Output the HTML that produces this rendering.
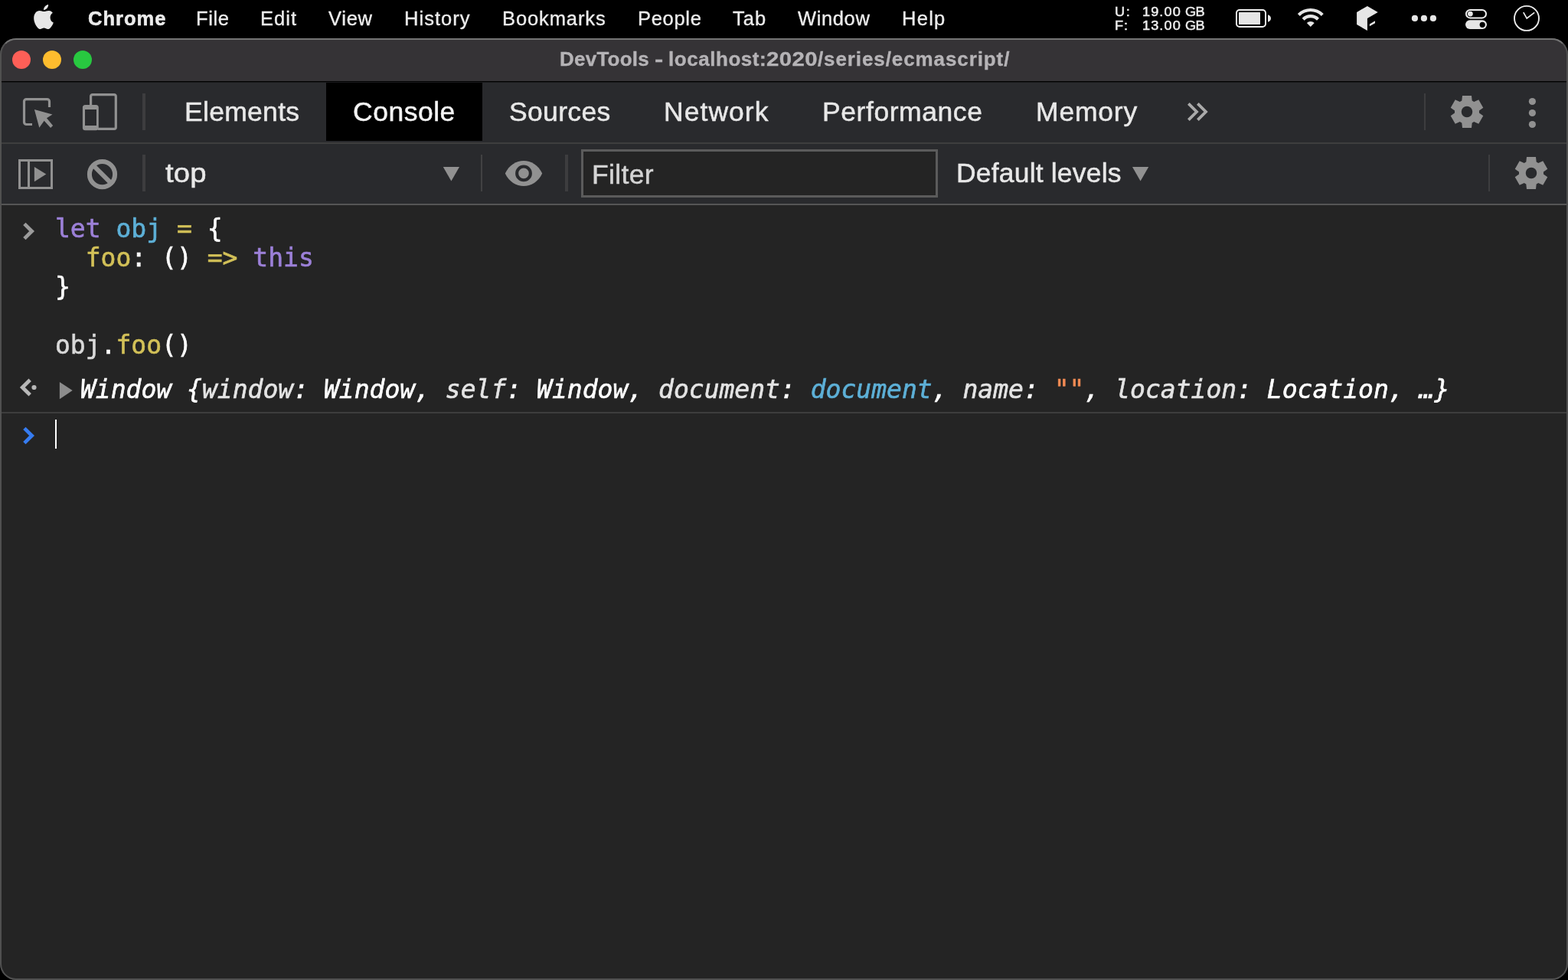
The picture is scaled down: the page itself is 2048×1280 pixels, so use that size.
<!DOCTYPE html>
<html lang="en">
<head>
<meta charset="utf-8">
<title>DevTools - localhost:2020/series/ecmascript/</title>
<style>
html,body{margin:0;padding:0;background:#000;}
body{width:2048px;height:1280px;position:relative;overflow:hidden;font-family:"Liberation Sans",sans-serif;}
.abs{position:absolute;}
.t{position:absolute;white-space:pre;line-height:1;will-change:transform;-webkit-text-stroke:0.35px;}
svg{position:absolute;overflow:visible;}
#menubar{left:0;top:0;width:2048px;height:50px;background:#000;}
.mi{font-size:25.5px;color:#ececec;}
.mb{font-weight:bold;-webkit-text-stroke:0.55px;}
.stat{font-size:16.5px;color:#ececec;-webkit-text-stroke:0.5px;}
#win{left:0;top:50px;width:2048px;height:1230px;border-radius:21px;background:#242424;overflow:hidden;}
#pg{left:0;top:-50px;width:2048px;height:1280px;}
#winborder{left:0;top:50px;width:2048px;height:1230px;box-sizing:border-box;border:2px solid #505050;border-top-color:#747474;border-radius:21px;}
#titlebar{left:0;top:50px;width:2048px;height:56px;background:#353336;}
#tline{left:0;top:106px;width:2048px;height:2px;background:linear-gradient(#000 50%,#1b1b1d 50%);}
#tabbar{left:0;top:108px;width:2048px;height:78px;background:#292a2d;}
#tabline{left:0;top:186px;width:2048px;height:2px;background:#3e3e3e;}
#toolbar{left:0;top:188px;width:2048px;height:78px;background:#292a2d;}
#toolline{left:0;top:266px;width:2048px;height:2px;background:#555;}
.title{font-size:26px;font-weight:bold;color:#b5b3b6;}
.tab{font-size:35.5px;color:#e8e8e8;-webkit-text-stroke:0.5px;}
.sel{color:#f4f4f4;}
.flt{color:#d4d4d4;}
.mono{font-family:"DejaVu Sans Mono","Liberation Mono",monospace;font-size:33px;line-height:38px;white-space:pre;will-change:transform;-webkit-text-stroke:0.6px;}
.kw{color:#9c80d8;}
.df{color:#5db0d7;}
.pr{color:#d3c158;}
.pl{color:#fff;}
.st{color:#f28b54;}
.it{font-style:italic;}
.dim{color:#e4e4e4;}
.var{color:#d9d9d9;}
</style>
</head>
<body>
<div id="menubar" class="abs"><svg width="2048" height="50" viewBox="0 0 2048 50" style="left:0;top:0;">
<g transform="translate(32 0) scale(0.034364)" fill="#e6e6e6"><path d="M740 440C800 440 850 400 930 405C990 408 1040 440 1072 490C1010 530 975 600 978 675C980 760 1030 830 1100 858C1080 930 1030 1010 980 1060C950 1090 920 1105 885 1105C830 1105 800 1065 740 1065C680 1065 650 1105 595 1105C560 1105 530 1085 495 1045C420 960 355 820 355 690C355 520 450 405 570 405C640 405 690 440 740 440Z"/><path d="M727 378C720 300 790 190 905 172C915 260 840 370 727 378Z"/></g>
<rect x="1615" y="13" width="38" height="22" rx="4" ry="4" fill="none" stroke="#f0f0f0" stroke-width="2"/>
<rect x="1618" y="16" width="28" height="16" rx="0.5" fill="#e6e6e6"/>
<path fill="#e6e6e6" d="M1656 19.3C1658.5 19.8 1660 22 1660 24C1660 26 1658.5 28.2 1656 28.7Z"/>
<path fill="#e6e6e6" d="M1694.83 17.93A24 24 0 0 1 1728.77 17.93L1725.80 20.90A19.8 19.8 0 0 0 1697.80 20.90ZM1700.63 23.73A15.8 15.8 0 0 1 1722.97 23.73L1720.00 26.70A11.6 11.6 0 0 0 1703.60 26.70ZM1711.80 34.90L1706.85 29.95A7 7 0 0 1 1716.75 29.95Z"/>
<path fill="#e6e6e6" d="M1785.9 7.9L1799.7 15.9L1785.9 24.1V40L1772.1 32V15.9Z"/>
<path fill="#e6e6e6" d="M1788.9 31.4L1796 27.2V30.2L1788.9 34.2Z"/>
<circle cx="1847.9" cy="23.9" r="4.1" fill="#e6e6e6"/>
<circle cx="1859.9" cy="23.9" r="4.1" fill="#e6e6e6"/>
<circle cx="1871.9" cy="23.9" r="4.1" fill="#e6e6e6"/>
<rect x="1915" y="13" width="26" height="10.4" rx="5.2" fill="none" stroke="#f0f0f0" stroke-width="2"/>
<circle cx="1920.4" cy="18.1" r="3.4" fill="#e6e6e6"/>
<rect x="1914" y="26.3" width="28" height="11.6" rx="5.8" fill="#e6e6e6"/>
<circle cx="1936.2" cy="32.3" r="3.6" fill="#000"/>
<circle cx="1994" cy="23.9" r="16" fill="none" stroke="#ececec" stroke-width="1.9"/>
<path fill="none" stroke="#ececec" stroke-width="1.7" d="M1989.75 16.1L1994.2 23.9L2004.2 16.4"/>
</svg></div>
<div id="win" class="abs"><div id="pg" class="abs">
<div id="titlebar" class="abs"></div>
<div class="abs" style="left:16px;top:66px;width:24px;height:24px;border-radius:50%;background:#fe5f57;"></div>
<div class="abs" style="left:56px;top:66px;width:24px;height:24px;border-radius:50%;background:#febc2e;"></div>
<div class="abs" style="left:96px;top:66px;width:24px;height:24px;border-radius:50%;background:#28c840;"></div>
<div id="tline" class="abs"></div>
<div id="tabbar" class="abs"></div>
<div class="abs" style="left:426px;top:108px;width:204px;height:76px;background:#000;"></div>
<div id="tabline" class="abs"></div>
<div id="toolbar" class="abs"></div>
<div id="toolline" class="abs"></div>
<div class="abs" style="left:759px;top:195px;width:466px;height:63px;box-sizing:border-box;border:3px solid #5b5b5b;background:#242424;"></div>
<svg width="2048" height="1280" viewBox="0 0 2048 1280" style="left:0;top:0;">
<rect x="186" y="122" width="4" height="48" fill="#3d3d3f"/>
<rect x="1860" y="122" width="2" height="48" fill="#3d3d3f"/>
<rect x="186" y="202" width="4" height="48" fill="#3d3d3f"/>
<rect x="628" y="202" width="2" height="48" fill="#414143"/>
<rect x="738" y="202" width="4" height="48" fill="#3d3d3f"/>
<rect x="1944" y="202" width="2" height="48" fill="#3d3d3f"/>
<path fill="none" stroke="#919191" stroke-width="3.2" d="M42 162.5H34.5a3 3 0 0 1-3-3V132.6a3 3 0 0 1 3-3H61.5a3 3 0 0 1 3 3V140"/>
<path fill="#919191" d="M44.9 142.9L68.5 149.4L61 154.3L69.1 164.1L66.1 167.1L57.7 157.8L51.3 166.8Z"/>
<path fill="none" stroke="#919191" stroke-width="3.2" d="M118.6 137V125.8a2.2 2.2 0 0 1 2.2-2.2H149.1a2.2 2.2 0 0 1 2.2 2.2V166.2a2.2 2.2 0 0 1-2.2 2.2H128"/>
<path fill="#919191" fill-rule="evenodd" d="M111.4 136.9H125.3a3.5 3.5 0 0 1 3.5 3.5V166.7a3.5 3.5 0 0 1-3.5 3.5H111.4a3.5 3.5 0 0 1-3.5-3.5V140.4a3.5 3.5 0 0 1 3.5-3.5ZM111 143.1V163.9H126V143.1Z"/>
<path fill="none" stroke="#aaaaaa" stroke-width="3.8" stroke-linejoin="miter" d="M1552.35 135.36L1563 146L1552.35 156.65M1564.35 135.36L1575 146L1564.35 156.65"/>
<path fill="#919191" fill-rule="evenodd" d="M1909.30 131.47L1910.00 124.90L1922.00 124.90L1922.70 131.47A16.00 16.00 0 0 1 1925.23 132.93L1931.27 130.25L1937.27 140.65L1931.93 144.54A16.00 16.00 0 0 1 1931.93 147.46L1937.27 151.35L1931.27 161.75L1925.23 159.07A16.00 16.00 0 0 1 1922.70 160.53L1922.00 167.10L1910.00 167.10L1909.30 160.53A16.00 16.00 0 0 1 1906.77 159.07L1900.73 161.75L1894.73 151.35L1900.07 147.46A16.00 16.00 0 0 1 1900.07 144.54L1894.73 140.65L1900.73 130.25L1906.77 132.93A16.00 16.00 0 0 1 1909.30 131.47ZM1908.75 146.00a7.25 7.25 0 1 0 14.5 0a7.25 7.25 0 1 0 -14.5 0Z"/>
<path fill="#919191" fill-rule="evenodd" d="M1993.30 211.47L1994.00 204.90L2006.00 204.90L2006.70 211.47A16.00 16.00 0 0 1 2009.23 212.93L2015.27 210.25L2021.27 220.65L2015.93 224.54A16.00 16.00 0 0 1 2015.93 227.46L2021.27 231.35L2015.27 241.75L2009.23 239.07A16.00 16.00 0 0 1 2006.70 240.53L2006.00 247.10L1994.00 247.10L1993.30 240.53A16.00 16.00 0 0 1 1990.77 239.07L1984.73 241.75L1978.73 231.35L1984.07 227.46A16.00 16.00 0 0 1 1984.07 224.54L1978.73 220.65L1984.73 210.25L1990.77 212.93A16.00 16.00 0 0 1 1993.30 211.47ZM1992.75 226.00a7.25 7.25 0 1 0 14.5 0a7.25 7.25 0 1 0 -14.5 0Z"/>
<circle cx="2001.4" cy="132.5" r="4.6" fill="#919191"/>
<circle cx="2001.4" cy="147.5" r="4.6" fill="#919191"/>
<circle cx="2001.4" cy="162.5" r="4.6" fill="#919191"/>
<path fill="#919191" fill-rule="evenodd" d="M24 208H69V247H24ZM27 211V244H36V211ZM39 211V244H66V211Z"/>
<path fill="#919191" d="M44.9 218L60.3 227.5L44.9 237.3Z"/>
<circle cx="133.5" cy="227.7" r="16.6" fill="none" stroke="#919191" stroke-width="6"/>
<path stroke="#919191" stroke-width="6" d="M121.8 216L145.2 239.4"/>
<path fill="#919191" d="M578.8 218.1H600L589.4 236.4Z"/>
<path fill="#919191" d="M1479 218.1H1500.2L1489.6 236.4Z"/>
<path fill="#919191" d="M659.8 226.4C670 204.4 698 204.4 708.2 226.4C698 248.5 670 248.5 659.8 226.4Z"/>
<circle cx="684" cy="226.4" r="8.85" fill="none" stroke="#292a2d" stroke-width="4.1"/>
<path fill="none" stroke="#9b9b9b" stroke-width="4.8" d="M31.85 292.35L41.6 302L31.85 311.65"/>
<path fill="none" stroke="#b8b8b8" stroke-width="4.8" d="M39.2 496.3L29.3 506L39.2 515.7"/>
<circle cx="44.5" cy="506" r="3.1" fill="#b8b8b8"/>
<path fill="#8c8c8c" d="M77.9 498.9V521.2L94.7 510Z"/>
<path fill="none" stroke="#367cf1" stroke-width="4.8" d="M31.85 559.35L41.6 569L31.85 578.65"/>
</svg>
<div class="abs mono" style="left:72.4px;top:280px;"><span class="kw">let</span> <span class="df">obj</span> <span class="pr">=</span> <span class="pl">{</span>
  <span class="pr">foo</span><span class="pl">: ()</span> <span class="pr">=&gt;</span> <span class="kw">this</span>
<span class="pl">}</span>

<span class="var">obj</span><span class="pl">.</span><span class="pr">foo</span><span class="pl">()</span></div>
<div class="abs mono it" style="left:105px;top:490px;color:#fff;">Window {<span class="dim">window</span>: Window, <span class="dim">self</span>: Window, <span class="dim">document</span>: <span class="df">document</span>, <span class="dim">name</span>: <span class="st">""</span>, <span class="dim">location</span>: Location, …}</div>
<div class="abs" style="left:0;top:538px;width:2048px;height:2px;background:#3d3d3d;"></div>
<div class="abs" style="left:72px;top:548px;width:2px;height:38px;background:#fff;"></div>
</div></div>
<div id="winborder" class="abs"></div>
<span id="x_chrome" class="t mi mb" style="left:114.5px;top:12.0px;letter-spacing:1.03px;">Chrome</span>
<span id="x_file" class="t mi" style="left:256.2px;top:12.0px;letter-spacing:0.64px;">File</span>
<span id="x_edit" class="t mi" style="left:340.2px;top:12.0px;letter-spacing:1.02px;">Edit</span>
<span id="x_view" class="t mi" style="left:428.8px;top:12.0px;letter-spacing:0.72px;">View</span>
<span id="x_history" class="t mi" style="left:528.0px;top:12.0px;letter-spacing:1.04px;">History</span>
<span id="x_bookmarks" class="t mi" style="left:656.0px;top:12.0px;letter-spacing:0.90px;">Bookmarks</span>
<span id="x_people" class="t mi" style="left:832.7px;top:12.0px;letter-spacing:0.70px;">People</span>
<span id="x_tab" class="t mi" style="left:957.0px;top:12.0px;letter-spacing:1.09px;">Tab</span>
<span id="x_window" class="t mi" style="left:1042.0px;top:12.0px;letter-spacing:0.62px;">Window</span>
<span id="x_help" class="t mi" style="left:1177.5px;top:12.0px;letter-spacing:1.28px;">Help</span>
<span id="x_u" class="t stat" style="left:1455.5px;top:7.2px;letter-spacing:1.44px;transform:scaleX(1.1);transform-origin:0 0;">U:</span>
<span id="x_uv" class="t stat" style="left:1491.5px;top:7.2px;letter-spacing:0.98px;transform:scaleX(1.1);transform-origin:0 0;">19.00</span>
<span id="x_uvg" class="t stat" style="left:1548.4px;top:7.2px;letter-spacing:-0.60px;transform:scaleX(1.1);transform-origin:0 0;">GB</span>
<span id="x_f" class="t stat" style="left:1455.5px;top:25.2px;letter-spacing:0.72px;transform:scaleX(1.1);transform-origin:0 0;">F:</span>
<span id="x_fv" class="t stat" style="left:1491.5px;top:25.2px;letter-spacing:0.98px;transform:scaleX(1.1);transform-origin:0 0;">13.00</span>
<span id="x_fvg" class="t stat" style="left:1548.4px;top:25.2px;letter-spacing:-0.60px;transform:scaleX(1.1);transform-origin:0 0;">GB</span>
<span id="x_t1" class="t title" style="left:730.5px;top:63.7px;letter-spacing:0.24px;">DevTools</span>
<span id="x_t2" class="t title" style="left:854.6px;top:63.7px;letter-spacing:0.50px;transform:scaleX(1.3);transform-origin:0 0;">-</span>
<span id="x_t3" class="t title" style="left:872.7px;top:63.7px;letter-spacing:0.55px;">localhost:</span>
<span id="x_t4" class="t title" style="left:1001.1px;top:63.7px;letter-spacing:0.39px;transform:scaleX(1.13);transform-origin:0 0;">2020</span>
<span id="x_t5" class="t title" style="left:1068.4px;top:63.7px;letter-spacing:0.90px;">/series/ecmascript/</span>
<span id="x_elements" class="t tab" style="left:240.8px;top:129.0px;letter-spacing:0.30px;">Elements</span>
<span id="x_console" class="t tab sel" style="left:460.9px;top:129.0px;letter-spacing:0.51px;">Console</span>
<span id="x_sources" class="t tab" style="left:664.5px;top:129.0px;letter-spacing:0.33px;">Sources</span>
<span id="x_network" class="t tab" style="left:867.3px;top:129.0px;letter-spacing:1.05px;">Network</span>
<span id="x_perf" class="t tab" style="left:1074.3px;top:129.0px;letter-spacing:0.57px;">Performance</span>
<span id="x_memory" class="t tab" style="left:1353.3px;top:129.0px;letter-spacing:0.81px;">Memory</span>
<span id="x_top" class="t tab" style="left:215.9px;top:209.0px;letter-spacing:0.16px;transform:scaleX(1.08);transform-origin:0 0;">top</span>
<span id="x_filter" class="t tab flt" style="left:773.3px;top:211.0px;letter-spacing:0.33px;">Filter</span>
<span id="x_levels" class="t tab" style="left:1248.9px;top:209.0px;letter-spacing:0.18px;">Default levels</span>
</body>
</html>
